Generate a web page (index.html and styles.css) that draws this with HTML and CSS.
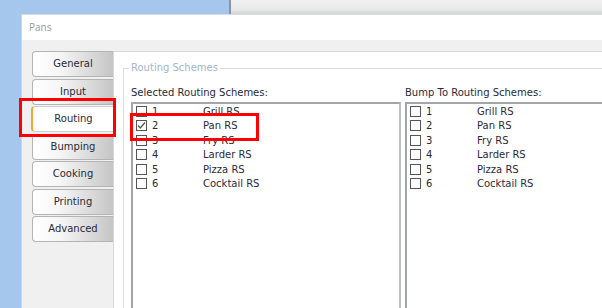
FILE: index.html
```html
<!DOCTYPE html>
<html lang="en">
<head>
    <meta charset="UTF-8">
    <title>Pans</title>
    <link rel="stylesheet" href="styles.css">
</head>
<body>
    <div class="desktop">
        <div class="back-window"></div>

        <div class="dialog">
            <div class="titlebar">Pans</div>
            <div class="dialog-body">
                <div class="tabs">
                    <div class="tab">General</div>
                    <div class="tab">Input</div>
                    <div class="tab active">Routing</div>
                    <div class="tab">Bumping</div>
                    <div class="tab">Cooking</div>
                    <div class="tab">Printing</div>
                    <div class="tab">Advanced</div>
                </div>

                <div class="tab-panel">
                    <fieldset class="group">
                        <legend>Routing Schemes</legend>
                        <div class="lists">
                            <div class="list-col first">
                                <div class="list-label">Selected Routing Schemes:</div>
                                <div class="listbox">
                                    <div class="row"><span class="check"></span><span class="num">1</span><span class="name">Grill RS</span></div>
                                    <div class="row"><span class="check checked"><svg viewBox="0 0 11 11" width="11" height="11"><path d="M2 5.5 L4.3 8 L9 2.5" fill="none" stroke="#5a5a5a" stroke-width="1.4"/></svg></span><span class="num">2</span><span class="name">Pan RS</span></div>
                                    <div class="row"><span class="check"></span><span class="num">3</span><span class="name">Fry RS</span></div>
                                    <div class="row"><span class="check"></span><span class="num">4</span><span class="name">Larder RS</span></div>
                                    <div class="row"><span class="check"></span><span class="num">5</span><span class="name">Pizza RS</span></div>
                                    <div class="row"><span class="check"></span><span class="num">6</span><span class="name">Cocktail RS</span></div>
                                </div>
                            </div>
                            <div class="list-col second">
                                <div class="list-label">Bump To Routing Schemes:</div>
                                <div class="listbox">
                                    <div class="row"><span class="check"></span><span class="num">1</span><span class="name">Grill RS</span></div>
                                    <div class="row"><span class="check"></span><span class="num">2</span><span class="name">Pan RS</span></div>
                                    <div class="row"><span class="check"></span><span class="num">3</span><span class="name">Fry RS</span></div>
                                    <div class="row"><span class="check"></span><span class="num">4</span><span class="name">Larder RS</span></div>
                                    <div class="row"><span class="check"></span><span class="num">5</span><span class="name">Pizza RS</span></div>
                                    <div class="row"><span class="check"></span><span class="num">6</span><span class="name">Cocktail RS</span></div>
                                </div>
                            </div>
                        </div>
                    </fieldset>
                </div>
            </div>
        </div>

        <!-- annotation boxes drawn over the screenshot -->
        <div class="highlight highlight-tab"></div>
        <div class="highlight highlight-row"></div>
    </div>
</body>
</html>
```

FILE: styles.css
```css
body {
    margin: 0;
    font-family: "DejaVu Sans", Verdana, sans-serif;
    font-size: 10px;
    color: #2a2a36;
}

.desktop {
    position: relative;
    width: 602px;
    height: 308px;
    overflow: hidden;
    background: #a6c7ed;
}

.back-window {
    position: absolute;
    left: 229px;
    top: 0;
    width: 373px;
    height: 14px;
    box-sizing: border-box;
    border-left: 2px solid #8c939c;
    background: linear-gradient(#f1f1f1 0%, #e8e8e8 70%, #d3d3d3 100%);
}

.dialog {
    position: absolute;
    left: 21px;
    top: 14px;
    right: 0;
    bottom: 0;
    display: flex;
    flex-direction: column;
    border-left: 1px solid #c8d6e6;
    border-top: 1px solid #d4e0ec;
    background: #f0f0f0;
}

.titlebar {
    height: 25px;
    flex-shrink: 0;
    background: #fff;
    padding-left: 7px;
    font-family: "Open Sans", sans-serif;
    font-size: 10px;
    line-height: 25px;
    color: #999;
}

.dialog-body {
    flex: 1;
    display: flex;
    padding-top: 11px;
    min-height: 0;
}

.tabs {
    width: 81px;
    margin-left: 10px;
    flex-shrink: 0;
    position: relative;
    z-index: 1;
}

.tab {
    height: 26px;
    margin-bottom: 1.5px;
    box-sizing: border-box;
    border: 1px solid #b4b4b4;
    border-right: none;
    border-radius: 4px 0 0 4px;
    background: linear-gradient(to right, #ffffff 0%, #f5f5f5 35%, #c5c5c5 100%);
    text-align: center;
    line-height: 24px;
}

.tab.active {
    margin-left: -1px;
    margin-right: -1px;
    background: #fff;
    border-color: #d0d0d0;
    border-left: 2px solid #f3a73a;
}

.tab-panel {
    flex: 1;
    background: #fff;
    border-top: 1px solid #d8d8d8;
    border-left: 1px solid #d8d8d8;
    min-width: 0;
    overflow: hidden;
}

.group {
    margin: 10px -30px 0 9px;
    padding: 13px 0 0 7px;
    border: 1px solid #dcdcdc;
    border-right: none;
    border-bottom: none;
    height: 260px;
}

.group legend {
    padding: 0 2px;
    margin-left: -2px;
    line-height: 12px;
    color: #a3b5ca;
}

.lists {
    display: flex;
    gap: 4px;
}

.list-col.first {
    width: 270px;
}

.list-col.second {
    flex: 1;
}

.list-label {
    line-height: 12px;
    margin-bottom: 3px;
}

.listbox {
    height: 220px;
    border: 2px solid;
    border-color: #a2a6ab #bcbec6 #bcbec6 #a2a6ab;
    background: #fff;
}

.row {
    display: grid;
    grid-template-columns: 11px 46px 1fr;
    column-gap: 5px;
    align-items: center;
    height: 14.5px;
    padding-left: 3px;
}

.check {
    width: 11px;
    height: 11px;
    box-sizing: border-box;
    border: 1px solid #555;
    background: #fff;
    position: relative;
}

.check svg {
    position: absolute;
    left: -1px;
    top: -1px;
}

.highlight {
    position: absolute;
    box-sizing: border-box;
    border: 3px solid #ff0000;
    z-index: 5;
}

.highlight-tab {
    left: 19px;
    top: 98px;
    width: 97px;
    height: 39px;
}

.highlight-row {
    left: 130px;
    top: 113px;
    width: 129px;
    height: 28px;
}
```
